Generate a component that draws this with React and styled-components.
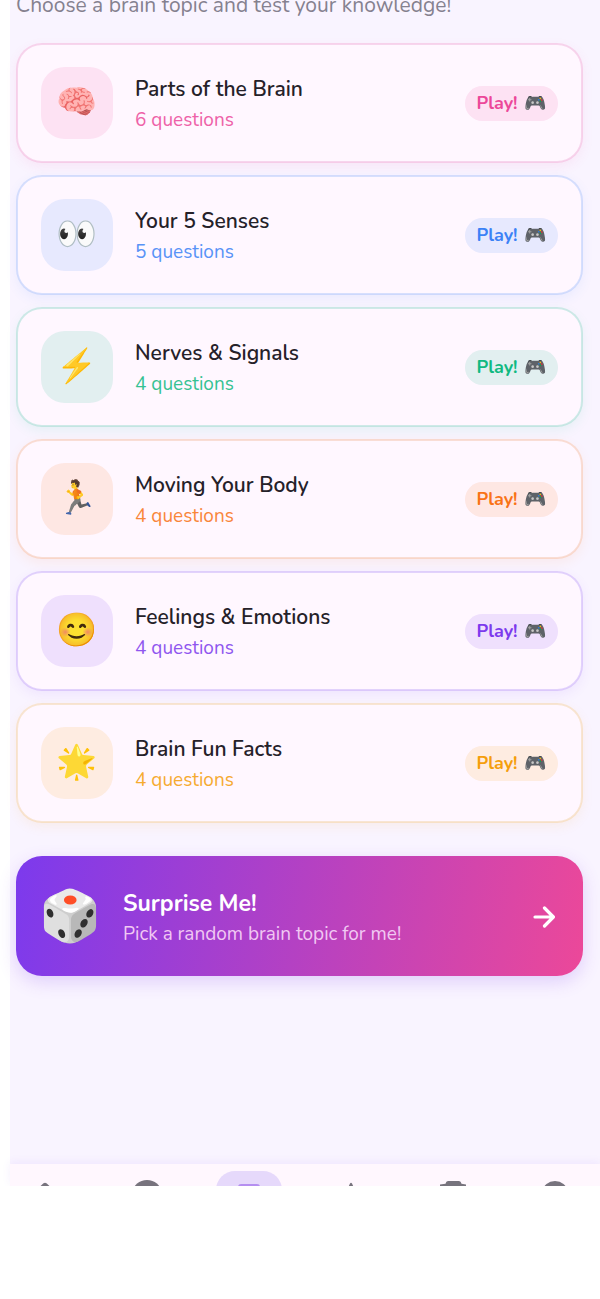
import styled, { createGlobalStyle } from "styled-components";

const GlobalStyle = createGlobalStyle`
  * {
    box-sizing: border-box;
  }
  body {
    margin: 0;
    background: #fff;
    font-family: Nunito, Lato, "Noto Color Emoji", sans-serif;
  }
`;

const Screen = styled.main`
  margin-left: 10px;
  background: #f9f4ff;
`;

const Content = styled.div`
  padding: 0 17px 188px 6px;
`;

const Intro = styled.header`
  display: flex;
  align-items: flex-end;
  height: 17px;
  overflow: hidden;
`;

const Intro_Text = styled.p`
  margin: 0;
  font-size: 21px;
  line-height: 24px;
  white-space: nowrap;
  color: #85818f;
`;

const Topic_List = styled.ul`
  display: grid;
  gap: 12px;
  margin: 26px 0 33px;
  padding: 0;
  list-style: none;
`;

const Topic_Card = styled.li`
  display: flex;
  align-items: center;
  gap: 22px;
  height: 120px;
  padding: 0 23px;
  background: #fff7ff;
  border: 2px solid ${(p) => p.$color}2e;
  background-clip: padding-box;
  border-radius: 26px;
  box-shadow: 0 4px 12px ${(p) => p.$color}14;
`;

const Topic_Icon = styled.span`
  display: grid;
  place-items: center;
  flex: none;
  width: 72px;
  height: 72px;
  border-radius: 24px;
  background: ${(p) => p.$color}1f;
  font-size: 33px;
  line-height: 40px;
`;

const Topic_Info = styled.div`
  flex: 1;
  padding-top: 4px;
`;

const Topic_Title = styled.h2`
  margin: 0;
  font-size: 21px;
  font-weight: 600;
  line-height: 31px;
  color: #252129;
`;

const Topic_Count = styled.p`
  margin: 0;
  font-size: 19px;
  line-height: 31px;
  color: ${(p) => p.$color};
  opacity: 0.85;
`;

const Play_Button = styled.button`
  display: flex;
  align-items: center;
  gap: 7px;
  height: 35px;
  padding: 0 11px;
  border: none;
  border-radius: 18px;
  background: ${(p) => p.$color}1f;
  color: ${(p) => p.$color};
  font: inherit;
  font-size: 18px;
  font-weight: 700;
  cursor: pointer;
`;

const Surprise = styled.button`
  display: flex;
  align-items: center;
  width: 100%;
  height: 120px;
  padding: 0 28px 0 23px;
  border: none;
  border-radius: 26px;
  background: linear-gradient(100deg, #7c3aed, #ec4899);
  box-shadow: 0 6px 18px #7c3aed33;
  color: #fff;
  font: inherit;
  text-align: left;
  cursor: pointer;
`;

const Dice = styled.span`
  width: 84px;
  padding-top: 2px;
  font-size: 50px;
  line-height: 60px;
`;

const Surprise_Info = styled.span`
  flex: 1;
  padding-top: 6px;
`;

const Surprise_Title = styled.span`
  display: block;
  font-size: 23px;
  font-weight: 700;
  line-height: 31px;
`;

const Surprise_Desc = styled.span`
  display: block;
  font-size: 19px;
  line-height: 31px;
  color: #f1c8f3;
`;

const Nav = styled.nav`
  display: flex;
  justify-content: space-between;
  height: 22px;
  padding: 7px 12px 0 2px;
  overflow: hidden;
  background: #fff7fe;
  box-shadow: 0 -2px 8px #7c3aed14;
`;

const Nav_Link = styled.a`
  display: flex;
  justify-content: center;
  width: 66px;
  height: 38px;
  padding-top: 5px;
  border-radius: 19px;
  background: ${(p) => (p.$active ? "#e6d9fb" : "none")};
  color: ${(p) => (p.$active ? "#b58ff0" : "#77737d")};
`;

const topics = [
  { icon: "🧠", title: "Parts of the Brain", count: 6, color: "#ec4899" },
  { icon: "👀", title: "Your 5 Senses", count: 5, color: "#3b82f6" },
  { icon: "⚡", title: "Nerves & Signals", count: 4, color: "#10b981" },
  { icon: "🏃", title: "Moving Your Body", count: 4, color: "#f97316" },
  { icon: "😊", title: "Feelings & Emotions", count: 4, color: "#7c3aed" },
  { icon: "🌟", title: "Brain Fun Facts", count: 4, color: "#f59e0b" },
];

const tabs = [
  { name: "Home", path: "M12.5 7.3 Q14 6.2 15.5 7.3 L26 17 V28 H2 V17 Z" },
  { name: "Brain", path: "M14 4 a14 12 0 1 1 0 24 a14 12 0 1 1 0 -24 Z" },
  { name: "Quiz", path: "M6 8 H22 a3 3 0 0 1 3 3 V28 H3 V11 a3 3 0 0 1 3 -3 Z", active: true },
  { name: "Badges", path: "M13 7.5 Q14 6 15 7.5 L18 14 L27 15 L20 21 L22 28 H6 L8 21 L1 15 L10 14 Z" },
  { name: "Cards", path: "M9 5 H20 Q22 5 22.5 7.8 L27 8.5 V28 H1 V8.5 L6.5 7.8 Q7 5 9 5 Z" },
  { name: "Profile", path: "M14 5 a12 10 0 1 1 0 20 a12 10 0 1 1 0 -20 Z" },
];

const App = () => {
  return (
    <>
      <GlobalStyle />
      <Screen>
        <Content>
          <Intro>
            <Intro_Text>Choose a brain topic and test your knowledge!</Intro_Text>
          </Intro>
          <Topic_List>
            {topics.map(({ icon, title, count, color }) => (
              <Topic_Card key={title} $color={color}>
                <Topic_Icon $color={color}>{icon}</Topic_Icon>
                <Topic_Info>
                  <Topic_Title>{title}</Topic_Title>
                  <Topic_Count $color={color}>{count} questions</Topic_Count>
                </Topic_Info>
                <Play_Button $color={color}>
                  Play! <span>🎮</span>
                </Play_Button>
              </Topic_Card>
            ))}
          </Topic_List>
          <Surprise>
            <Dice>🎲</Dice>
            <Surprise_Info>
              <Surprise_Title>Surprise Me!</Surprise_Title>
              <Surprise_Desc>Pick a random brain topic for me!</Surprise_Desc>
            </Surprise_Info>
            <svg
              width="22"
              height="24"
              viewBox="0 0 22 24"
              fill="none"
              stroke="currentColor"
              strokeWidth="3.2"
              strokeLinecap="round"
              strokeLinejoin="round"
            >
              <path d="M2 13 H20 M11.5 4 L20.4 13 L11.5 22" />
            </svg>
          </Surprise>
        </Content>
        <Nav>
          {tabs.map(({ name, path, active }) => (
            <Nav_Link key={name} href="#" aria-label={name} $active={active}>
              <svg width="28" height="28" viewBox="0 0 28 28" fill="currentColor">
                <path d={path} />
              </svg>
            </Nav_Link>
          ))}
        </Nav>
      </Screen>
    </>
  );
};

export default App;
